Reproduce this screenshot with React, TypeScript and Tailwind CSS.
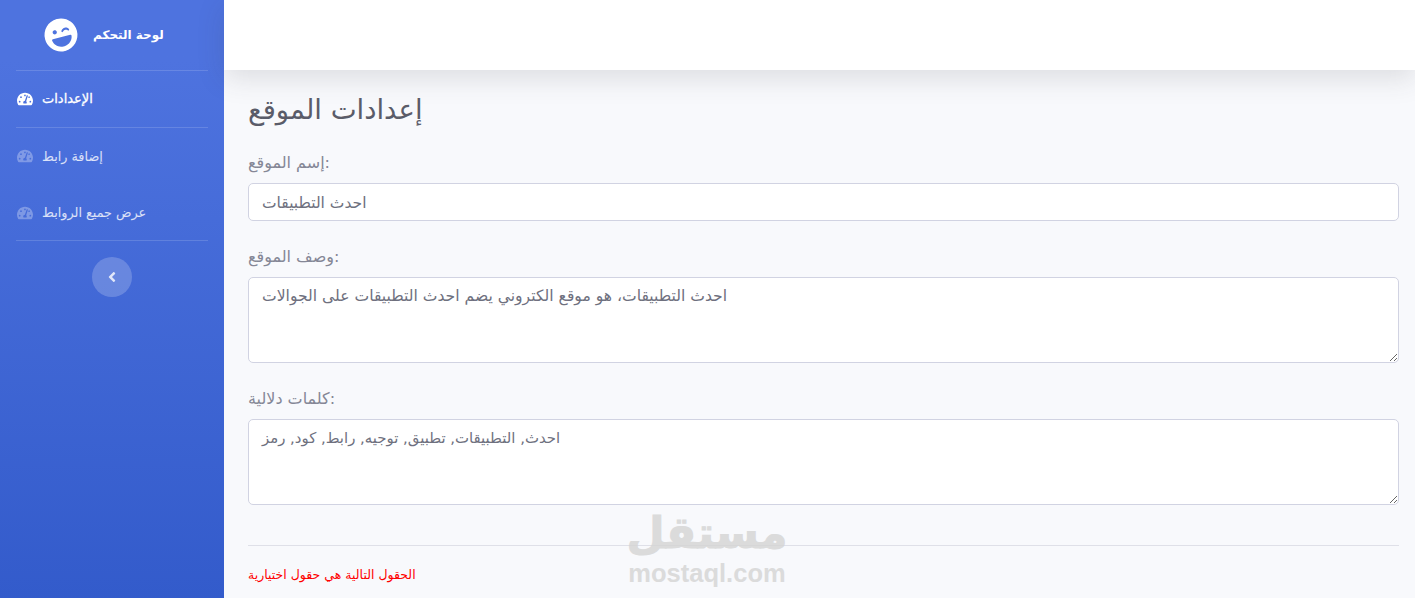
import { FaLaughWink, FaTachometerAlt, FaAngleLeft } from 'react-icons/fa';

const navItems = [
  { label: 'إضافة رابط' },
  { label: 'عرض جميع الروابط' },
];

export default function App() {
  return (
    <div className="relative flex h-[598px] overflow-hidden bg-[#f8f9fc] font-['DejaVu_Sans',sans-serif] text-[#858796]">
      <aside className="flex w-[224px] shrink-0 flex-col items-center bg-gradient-to-b from-[#4e73df] from-10% to-[#335bcb] text-white">
        <div className="flex h-[70px] w-full items-center gap-[15px] pl-[44px]">
          <FaLaughWink className="-rotate-[15deg] text-white" size={34} />
          <span className="text-[12px] font-bold">لوحة التحكم</span>
        </div>
        <div className="h-px w-[192px] bg-white/15" />
        <a className="flex h-[56px] w-full items-center gap-[9px] px-[17px] text-[13px] text-white [-webkit-text-stroke:0.3px_white]">
          <FaTachometerAlt size={16} />
          <span>الإعدادات</span>
        </a>
        <div className="h-px w-[192px] bg-white/15" />
        <div className="w-full">
          {navItems.map((item) => (
            <a key={item.label} className="flex h-[56.5px] w-full items-center gap-[9px] px-[17px] text-[12.8px] text-white/80">
              <FaTachometerAlt size={16} className="text-white/30" />
              <span>{item.label}</span>
            </a>
          ))}
        </div>
        <div className="-mt-[1px] h-px w-[192px] bg-white/15" />
        <button className="mt-4 flex h-10 w-10 items-center justify-center rounded-full bg-white/20 text-white/80">
          <FaAngleLeft size={16} />
        </button>
      </aside>

      <div className="flex min-w-0 flex-1 flex-col">
        <header className="h-[70px] shrink-0 bg-white shadow-[0_8px_28px_0_rgba(58,59,69,0.15)]" />
        <main className="flex-1 pl-6 pr-4 pt-[22px]">
          <h1 className="mb-[25px] text-[27.5px] leading-[34px] text-[#5a5c69]">إعدادات الموقع</h1>

          <label className="mb-2 block h-6 text-[16px] leading-6">إسم الموقع:</label>
          <input
            readOnly
            defaultValue="احدث التطبيقات"
            className="block h-[38px] w-full rounded-[5px] border border-[#d1d3e2] bg-white px-[13px] pt-[2px] text-[15.5px] text-[#6e707e] outline-none"
          />

          <label className="mb-2 mt-6 block h-6 text-[16px] leading-6">وصف الموقع:</label>
          <textarea
            readOnly
            defaultValue="احدث التطبيقات، هو موقع الكتروني يضم احدث التطبيقات على الجوالات"
            className="block h-[86px] w-full rounded-[5px] border border-[#d1d3e2] bg-white px-[13px] py-[6px] text-[15.6px] leading-6 text-[#6e707e] outline-none"
          />

          <label className="mb-2 mt-6 block h-6 text-[16px] leading-6">كلمات دلالية:</label>
          <textarea
            readOnly
            defaultValue="احدث, التطبيقات, تطبيق, توجيه, رابط, كود, رمز"
            className="block h-[86px] w-full rounded-[5px] border border-[#d1d3e2] bg-white px-[13px] py-[6px] text-[14.9px] leading-6 text-[#6e707e] outline-none"
          />

          <hr className="mt-10 border-t border-[#dfe0e8]" />
          <p className="mt-5 text-[12.5px] leading-[18px] text-[#ff0000]">الحقول التالية هي حقول اختيارية</p>
        </main>
      </div>

      {/* watermark */}
      <div className="pointer-events-none absolute left-[628px] top-[508px] flex w-[158px] flex-col items-center text-[#d4d4d4] opacity-80">
        <span className="h-[50px] text-[44px] font-bold leading-[50px] [-webkit-text-stroke:1px_#d4d4d4]">مستقل</span>
        <span className="font-['Liberation_Sans',sans-serif] text-[25.5px] font-bold leading-[30px]">mostaql.com</span>
      </div>
    </div>
  );
}
